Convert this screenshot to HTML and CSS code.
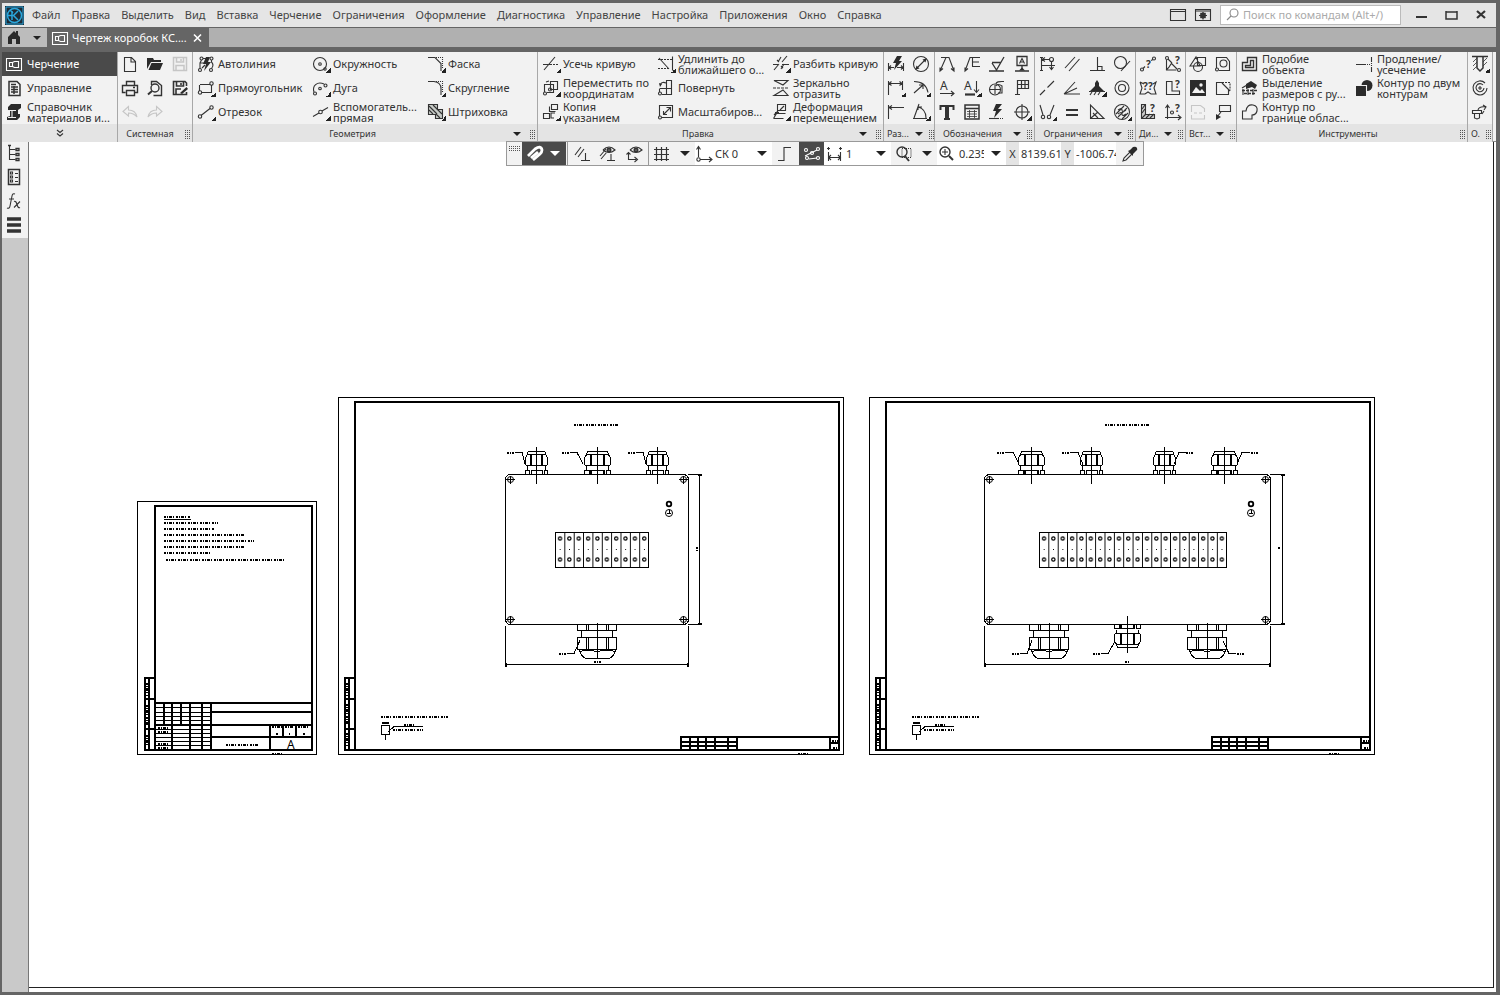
FILE: index.html
```
<!DOCTYPE html>
<html lang="ru">
<head>
  <meta charset="UTF-8">
  <meta name="viewport" content="width=device-width, initial-scale=1.0">
  <title>Чертеж коробок КС</title>
  <link rel="stylesheet" href="styles.css">
</head>
<body>

<header class="menubar">
  <svg class="logo" viewBox="0 0 19 19"><rect width="19" height="19" fill="#1d2b36"/><path d="M1 1h17v17H1z" stroke="#2aa7dd"/><circle cx="9.5" cy="9.5" r="7" stroke="#2aa7dd" stroke-width="1.5"/><path d="M7 5v9M3 9.5h4M13 5L8.500 9.5l4.500 4.500M8 7L5 4" stroke="#2aa7dd" stroke-width="1.5"/></svg>
  <nav class="menu">
    <a href="#">Файл</a>
    <a href="#">Правка</a>
    <a href="#">Выделить</a>
    <a href="#">Вид</a>
    <a href="#">Вставка</a>
    <a href="#">Черчение</a>
    <a href="#">Ограничения</a>
    <a href="#">Оформление</a>
    <a href="#">Диагностика</a>
    <a href="#">Управление</a>
    <a href="#">Настройка</a>
    <a href="#">Приложения</a>
    <a href="#">Окно</a>
    <a href="#">Справка</a>
  </nav>
  <div class="window-tools">
    <button aria-label="Окно"><svg class="ico" viewBox="0 0 20 20"><path d="M2.5 4.5h15v11h-15zM3 6.500h14"/></svg></button>
    <button aria-label="Вид окна"><svg class="ico" viewBox="0 0 20 20"><path d="M2.5 4.5h15v11h-15zM3 6h14"/><path d="M10 7v7.500M6 10.500h8M7.500 8l5 5M12.500 8l-5 5" stroke-width="1.2"/><circle cx="10" cy="10.5" r="2.200" stroke-width="1.5"/></svg></button>
  </div>
  <label class="search">
    <svg class="ico" viewBox="0 0 20 20"><circle cx="11" cy="8" r="4"/><path d="M8 11l-4 4"/></svg>
    <input type="text" placeholder="Поиск по командам (Alt+/)" aria-label="Поиск по командам">
  </label>
  <div class="window-buttons">
    <button aria-label="Свернуть"><svg class="ico" viewBox="0 0 20 20"><path d="M5 12h11" stroke-width="2"/></svg></button>
    <button aria-label="Развернуть"><svg class="ico" viewBox="0 0 20 20"><path d="M5 7h11M5 6v8h11V6" stroke-width="1.5"/></svg></button>
    <button aria-label="Закрыть"><svg class="ico" viewBox="0 0 20 20"><path d="M6 6l8 7M14 6l-8 7" stroke-width="2.2"/></svg></button>
  </div>
</header>

<div class="tabs">
  <button class="home" aria-label="Главная">
    <svg class="ico" viewBox="0 0 20 20"><path class="f" d="M4 9l6-6 2 2V3h2v4l2 2v7h-4v-5H8v5H4z"/></svg>
    <span class="arrow small"></span>
  </button>
  <div class="tab">
    <svg class="ico" viewBox="0 0 20 20"><path d="M2.5 4.5h15v12h-15zM5.5 8.500h3v4h-3zM8.500 8.500l2-1h4v6h-4l-2-1"/></svg>
    <span>Чертеж коробок КС....</span>
    <button aria-label="Закрыть вкладку"><svg class="ico" viewBox="0 0 20 20"><path d="M5 6.500l7 7M12 6.500l-7 7" stroke-width="1.6"/></svg></button>
  </div>
</div>

<div class="ribbon">
  <section class="group modes">
    <div class="cells">
      <button class="cmd active"><svg class="ico" viewBox="0 0 20 20"><path d="M2.5 4.5h15v12h-15zM5.5 8.500h3v4h-3zM8.500 8.500l2-1h4v6h-4l-2-1"/></svg><span>Черчение</span></button>
      <button class="cmd"><svg class="ico" viewBox="0 0 20 20"><path d="M5 3.500h8l3 3v11H5z" stroke-width="1.5"/><path d="M7 6.500h5M7 9h7M7 11.500h7M7 14h7M10 8v8" stroke-width="1.5"/></svg><span>Управление</span></button>
      <button class="cmd"><svg class="ico" viewBox="0 0 20 20"><path class="f" d="M7 2h10v4l-3 2v4h2v3l-3 3H3v-3l3-1V9H4V5z"/><path d="M4 8.500h8M8 9v6M4 15.500h8" stroke="#eee"/></svg><span>Справочник<br>материалов и...</span></button>
    </div>
    <footer><svg class="ico" viewBox="0 0 20 20"><path d="M7 6l3 2.500L13 6M7 9.500l3 2.500 3-2.500"/></svg></footer>
  </section>

  <section class="group icons">
    <div class="cells">
      <button aria-label="Создать"><svg class="ico" viewBox="0 0 20 20"><path d="M4.500 3.500h7l4 4v10h-11zM11 3.500v4.500h4.500"/></svg></button>
      <button aria-label="Печать"><svg class="ico" viewBox="0 0 20 20"><path d="M6.500 7V3.500h8V7M5.500 14.500h-3v-7h15v7h-3M6.500 12.500h8v5h-8zM13 9.500h2" stroke-width="1.4"/></svg></button>
      <button class="off" aria-label="Отменить"><svg class="ico" viewBox="0 0 20 20"><path d="M8.500 4.500L3 9.500l5.500 4.500v-3c4 0 6 1 8.500 4-1-5-4-7-8.500-7z"/></svg></button>
      <button aria-label="Открыть"><svg class="ico" viewBox="0 0 20 20"><path class="f" d="M2 15V4h6l1 2h7v2H6zM6.500 9H18l-3 7H3.500z"/></svg></button>
      <button aria-label="Просмотр"><svg class="ico" viewBox="0 0 20 20"><path d="M6.500 7V3.500h5l5 4v10h-8" stroke-width="1.4"/><circle cx="10" cy="10" r="4" stroke-width="1.4"/><path d="M7 13l-4 3.500" stroke-width="2"/></svg></button>
      <button class="off" aria-label="Повторить"><svg class="ico" viewBox="0 0 20 20"><path d="M11.500 4.500L17 9.500l-5.500 4.500v-3c-4 0-6 1-8.500 4 1-5 4-7 8.500-7z"/></svg></button>
      <button class="off" aria-label="Сохранить"><svg class="ico" viewBox="0 0 20 20"><path d="M3.500 3.500h13v13h-13zM6.500 4v4h7V4M6 16.500v-5h8v5M11 5v2" stroke-width="1.5"/></svg></button>
      <button aria-label="Сохранить как"><svg class="ico" viewBox="0 0 20 20"><path d="M16.500 8V5l-1.500-1.500H3.500v13h13V14M6.500 4v4h7V4M6 16v-5h5M11 5v2" stroke-width="1.6"/><path d="M10 15l6.500-6 1.500 2-6 5z" class="f"/></svg></button>
    </div>
    <footer><span>Системная</span><i class="grip"></i></footer>
  </section>

  <section class="group">
    <div class="cells">
      <button class="cmd"><svg class="ico" viewBox="0 0 20 20"><circle cx="4" cy="16" r="1.5"/><circle cx="5.5" cy="4.5" r="1.5"/><circle cx="15.5" cy="4.5" r="1.5"/><circle cx="15" cy="16" r="1.5"/><path d="M4 14.500V9l1.500-3M15.500 6v2c2 2 2 4 0 6.500M6 14l3-3M4 9h4M7 4.500h3"/><path class="f" d="M10 3h4l-2 5h3l-7 9 2-7H7z"/></svg><span>Автолиния</span></button>
      <button class="cmd more"><svg class="ico" viewBox="0 0 20 20"><path d="M4 6.500h10M3.500 7v6M6 14.500h9.500V7"/><circle cx="4" cy="14.500" r="1.700"/><circle cx="15.500" cy="5.500" r="1.700"/></svg><span>Прямоугольник</span></button>
      <button class="cmd more"><svg class="ico" viewBox="0 0 20 20"><path d="M5 13.500l9-7"/><circle cx="4" cy="14.500" r="1.700"/><circle cx="15.500" cy="5.500" r="1.700"/></svg><span>Отрезок</span></button>
      <button class="cmd more"><svg class="ico" viewBox="0 0 20 20"><circle cx="9" cy="10" r="6.500"/><circle cx="9" cy="10" r="1.300"/><circle cx="14" cy="15" r="1.200"/></svg><span>Окружность</span></button>
      <button class="cmd more"><svg class="ico" viewBox="0 0 20 20"><path d="M3 14C1 8 6 3 13 6"/><circle cx="9" cy="10.500" r="1.300"/><circle cx="14.500" cy="7.500" r="1.500"/><circle cx="4" cy="15.500" r="1.500"/></svg><span>Дуга</span></button>
      <button class="cmd more"><svg class="ico" viewBox="0 0 20 20"><path d="M2 14.500l6-3.500M11 9l6-3.500"/><circle cx="9.500" cy="10" r="1.800"/></svg><span>Вспомогатель...<br>прямая</span></button>
      <button class="cmd more"><svg class="ico" viewBox="0 0 20 20"><path d="M2 3.500h7l6 6V17"/><path d="M10 3.500h6.500V15" stroke-dasharray="1 1"/></svg><span>Фаска</span></button>
      <button class="cmd more"><svg class="ico" viewBox="0 0 20 20"><path d="M2 3.500h6q7 1 7 7V17"/><path d="M10 3.500h6.500V15" stroke-dasharray="1 1"/></svg><span>Скругление</span></button>
      <button class="cmd more"><svg class="ico" viewBox="0 0 20 20"><path d="M2.500 2.500h9v5h5v9h-7v-4h-7z" fill="#c8ccc8"/><path d="M3 4l8 8M3 8l4 4M7 3l9 9M10 12l4 4"/></svg><span>Штриховка</span></button>
    </div>
    <footer><span>Геометрия</span><i class="arrow small"></i><i class="grip"></i></footer>
  </section>

  <section class="group">
    <div class="cells">
      <button class="cmd more"><svg class="ico" viewBox="0 0 20 20"><path d="M2 10.500h7M3 16L14 3"/><path d="M9 10.500h9" stroke-dasharray="2 1"/></svg><span>Усечь кривую</span></button>
      <button class="cmd more"><svg class="ico" viewBox="0 0 20 20"><path d="M9.500 3.500h7v8h-7zM3.500 14V6.500h9v8H6M5 4l3-1"/><circle cx="4" cy="15.500" r="1.500"/><circle cx="9" cy="11.500" r="1.500"/></svg><span>Переместить по<br>координатам</span></button>
      <button class="cmd more"><svg class="ico" viewBox="0 0 20 20"><path d="M10.500 2.500h6v5h-6zM8.500 4.500v5h6M2.500 11.500h6v5h-6zM14 11h-4v5h3"/></svg><span>Копия<br>указанием</span></button>
      <button class="cmd more"><svg class="ico" viewBox="0 0 20 20"><path d="M16.500 2.500v14M3 4l10 11"/><path d="M2 5.500h14M2 14.500h12" stroke-dasharray="2 1"/></svg><span>Удлинить до<br>ближайшего о...</span></button>
      <button class="cmd"><svg class="ico" viewBox="0 0 20 20"><path d="M10.500 2.500h5v14h-5zM3.500 10.500h12M6 16.500h9M3.500 14v-3M4 7q2-4 6-2"/><circle cx="4" cy="15.500" r="1.500"/><path class="f" d="M3 5l3 1-2 3z"/></svg><span>Повернуть</span></button>
      <button class="cmd"><svg class="ico" viewBox="0 0 20 20"><path d="M3.500 14V3.500h13v12H6M8 12l6-6M10.500 5.500h4v4M7.500 9v3.500H11"/><circle cx="4" cy="15.500" r="1.500"/></svg><span>Масштабиров...</span></button>
      <button class="cmd more"><svg class="ico" viewBox="0 0 20 20"><path d="M3 16l5-6M11 8l5-6M2 10.500h5M11 10.500h7M6 6l2 2M10 12l2 2M10 3l-3 5M13 10l-3 5"/></svg><span>Разбить кривую</span></button>
      <button class="cmd"><svg class="ico" viewBox="0 0 20 20"><path d="M3 2.500h14L12 7zM3 17.500h14L12 12z"/><path d="M2 10h16" stroke-dasharray="3 1"/></svg><span>Зеркально<br>отразить</span></button>
      <button class="cmd more"><svg class="ico" viewBox="0 0 20 20"><path d="M6.500 2.500h8v6h-8zM2.500 16.500l3-5h9M2.500 16.500h10M3 13l4-4M9 8l4-4M4 10.500h4"/></svg><span>Деформация<br>перемещением</span></button>
    </div>
    <footer><span>Правка</span><i class="arrow small"></i><i class="grip"></i></footer>
  </section>

  <section class="group icons">
    <div class="cells">
      <button aria-label="Авторазмер"><svg class="ico" viewBox="0 0 20 20"><path d="M2.500 9v8M17.500 9v8M3 13.500h5M11 13.500h6M5 11.500l-2 2 2 2M15 11.500l2 2-2 2"/><path class="f" d="M11 2h5l-3 5h3l-8 9 2-7H7z"/></svg></button>
      <button class="more" aria-label="Линейный размер"><svg class="ico" viewBox="0 0 20 20"><path d="M2.500 17V3M16.500 12V3M3 5.500h13M5.500 3.500L3 5.500l2.500 2M13.500 3.500l2.500 2-2.500 2"/></svg></button>
      <button aria-label="Размер высоты"><svg class="ico" viewBox="0 0 20 20"><path d="M2.500 17V3M3 5.500h15M6 3.500l-3 2 3 2"/></svg></button>
      <button aria-label="Диаметр"><svg class="ico" viewBox="0 0 20 20"><circle cx="10" cy="10" r="7.500"/><path d="M5 15L15 5"/><path class="f" d="M4.500 15.500l1-4 3 3zM15.500 4.500l-1 4-3-3z"/></svg></button>
      <button class="more" aria-label="Радиус"><svg class="ico" viewBox="0 0 20 20"><path d="M3 3.500q12 0 14 11M3 15l9-8M8 7h4v4"/></svg></button>
      <button class="more" aria-label="Угловой размер"><svg class="ico" viewBox="0 0 20 20"><path d="M2 16.500h14M3 16L8 2M7 5q8 2 8 11M7 8l0-3h4"/></svg></button>
    </div>
    <footer><span>Раз...</span><i class="arrow small"></i><i class="grip"></i></footer>
  </section>

  <section class="group icons">
    <div class="cells">
      <button aria-label="Осевая"><svg class="ico" viewBox="0 0 20 20"><path d="M3 17L9 3.500h3L17 17M4 3.500h8M3 13.500V17l3-2.500M17 13.500V17l-3-2.500"/></svg></button>
      <button aria-label="Стрелка вида"><svg class="ico letter" viewBox="0 0 20 20"><path d="M3 15.500h14M14 13l3 2.500-3 2.500"/><text x="3" y="12">А</text></svg></button>
      <button aria-label="Текст"><svg class="ico" viewBox="0 0 20 20"><path d="M3 4h14M3.500 3v5M16.500 3v5M7 17h6" stroke-width="2"/><path d="M10 4v13" stroke-width="4"/></svg></button>
      <button aria-label="Линия-выноска"><svg class="ico" viewBox="0 0 20 20"><path d="M3 17L8 3.500h10M10 8h7M10 12.500h8M10.500 4v8.500M3 13.500V17l3-2.500"/></svg></button>
      <button class="more" aria-label="Линия разреза"><svg class="ico letter" viewBox="0 0 20 20"><path d="M14.500 3v11M12 11.500l2.500 3 2.500-3"/><path d="M3 16.500h10" stroke-width="2.2"/><text x="2" y="12">А</text></svg></button>
      <button aria-label="Таблица"><svg class="ico" viewBox="0 0 20 20"><path d="M3 3h14v14H3zM3 6.500h14" stroke-width="1.500"/><path d="M5 9.500h10M5 12h10M5 14.500h10M7.500 8v8M12.500 8v8" stroke-width="0.800"/></svg></button>
      <button aria-label="Шероховатость"><svg class="ico" viewBox="0 0 20 20"><path d="M2 17h15M5 8.500h9M5 9l4.500 7L17 3" stroke-width="1.300"/></svg></button>
      <button aria-label="Позиция"><svg class="ico" viewBox="0 0 20 20"><circle cx="8" cy="11.500" r="5.500"/><path d="M3 11.500h10M8 7v9M9 6q0-3 8-2.500M9 8q2-3 6 0v7h-4"/></svg></button>
      <button aria-label="Молния"><svg class="ico" viewBox="0 0 20 20"><path d="M2 16.500h10"/><path d="M13 16.500h4" stroke-dasharray="1 1"/><path class="f" d="M9 2h6l-4 5h4l-8 9 2-7H6z"/></svg></button>
      <button aria-label="База"><svg class="ico" viewBox="0 0 20 20"><path d="M5 2.500h10v9H5zM10 12v4M3 17h14" stroke-width="1.300"/><path d="M7.500 9.500l2.500-5 2.500 5M8.500 8h3"/><path class="f" d="M7 16.500l3-3 3 3z"/></svg></button>
      <button aria-label="Допуск формы"><svg class="ico" viewBox="0 0 20 20"><path d="M5.500 2.500h11v8h-11zM9.500 2.500v8M13 2.500v8M5.500 10v7M3 16.500h5M6 6.500h10" stroke-width="1.200"/></svg></button>
      <button class="more" aria-label="Центр"><svg class="ico" viewBox="0 0 20 20"><circle cx="10" cy="10" r="6"/><path d="M10 2v16M2 10h16"/></svg></button>
    </div>
    <footer><span>Обозначения</span><i class="arrow small"></i><i class="grip"></i></footer>
  </section>

  <section class="group icons">
    <div class="cells">
      <button aria-label="Авторасстановка"><svg class="ico" viewBox="0 0 20 20"><path d="M4.500 3v14M3 16.500h3M5 5.500h8M3 3.500h3M14.500 7v8M12.500 13l2 2.500 2-2.500M8 3.500L5 5.500l3 2M5 11.500h13"/><circle cx="14.500" cy="5.500" r="2"/></svg></button>
      <button aria-label="Коллинеарность"><svg class="ico" viewBox="0 0 20 20"><path d="M3 17l5-5M10.500 9.500L17 3"/></svg></button>
      <button class="more" aria-label="Симметрия"><svg class="ico" viewBox="0 0 20 20"><path d="M3 3l3 10M17 3l-4 10"/><circle cx="6" cy="15" r="1.700"/><circle cx="12" cy="15" r="1.700"/></svg></button>
      <button aria-label="Параллельность"><svg class="ico" viewBox="0 0 20 20"><path d="M3 14L13 3M7 17L17.500 5"/></svg></button>
      <button aria-label="Биссектриса"><svg class="ico" viewBox="0 0 20 20"><path d="M2 16h16M2 16L13 4M2 16l13-6"/></svg></button>
      <button aria-label="Равенство"><svg class="ico" viewBox="0 0 20 20"><path d="M4 8h12M4 13h12" stroke-width="2.200"/></svg></button>
      <button aria-label="Перпендикулярность"><svg class="ico" viewBox="0 0 20 20"><path d="M3 16.500h15M10.500 3v13M11 12.500h4v4"/></svg></button>
      <button class="more" aria-label="Фиксация"><svg class="ico" viewBox="0 0 20 20"><path class="f" d="M10 2l2 3v3l5 5H3l5-5V5z"/><path d="M2 13.500h16M5 14l-2 3M9 14l-2 3M13 14l-2 3"/></svg></button>
      <button aria-label="Угол"><svg class="ico" viewBox="0 0 20 20"><path d="M3.500 3v13.500H17zM4 16l7-6M6 11l5 5"/></svg></button>
      <button aria-label="Касание"><svg class="ico" viewBox="0 0 20 20"><circle cx="8.500" cy="8.500" r="6"/><path d="M9 17L18 7"/></svg></button>
      <button aria-label="Концентричность"><svg class="ico" viewBox="0 0 20 20"><circle cx="10" cy="10" r="7"/><circle cx="10" cy="10" r="3.500"/></svg></button>
      <button class="more" aria-label="Показать"><svg class="ico" viewBox="0 0 20 20"><circle cx="10" cy="10" r="7.500"/><path d="M4 12l8-8M6 15l9-9M6 8q4-3 4 0t4 0M6 12q4-3 4 0t4 0M10 17l6-6"/></svg></button>
    </div>
    <footer><span>Ограничения</span><i class="arrow small"></i><i class="grip"></i></footer>
  </section>

  <section class="group icons">
    <div class="cells">
      <button aria-label="Расстояние"><svg class="ico" viewBox="0 0 20 20"><circle cx="4" cy="15.500" r="1.500"/><circle cx="16" cy="4.500" r="1.500"/><path d="M5 14.500l2-2M15 5.500l-2 1"/><text x="8" y="14">?</text></svg></button>
      <button aria-label="Длина"><svg class="ico" viewBox="0 0 20 20"><path d="M2 4l4 2M2 4l2 6-2 6h5l3-2 3 2h5l-2-6 2-6-3 2"/><text x="5" y="12">?</text><text x="10" y="12">?</text></svg></button>
      <button aria-label="МЦХ"><svg class="ico" viewBox="0 0 20 20"><path d="M3.500 2.500h4v10h9v4h-13z" fill="#ccc"/><path d="M4 7l3-4M4 11l3-4M4 16l4-4M8 16l4-4M12 16l4-4"/><text x="12" y="10">?</text></svg></button>
      <button aria-label="Угол"><svg class="ico" viewBox="0 0 20 20"><circle cx="4" cy="4" r="1.500"/><circle cx="16" cy="16" r="1.500"/><path d="M3.500 6v10h10M3 16q3-2 5-6M5 5l4 4M8 9l6 6"/><text x="12" y="10">?</text></svg></button>
      <button aria-label="Площадь"><svg class="ico" viewBox="0 0 20 20"><path d="M9 3.500H3.500v13h13V13H9z"/><text x="12" y="10">?</text></svg></button>
      <button aria-label="Координаты"><svg class="ico" viewBox="0 0 20 20"><path d="M4.500 17V4M2.500 6l2-3 2 3M2 15.500h15M15 13l3 2.500-3 2.500"/><circle cx="9" cy="10.500" r="1.500"/><text x="12" y="10">?</text></svg></button>
    </div>
    <footer><span>Ди...</span><i class="arrow small"></i><i class="grip"></i></footer>
  </section>

  <section class="group icons">
    <div class="cells">
      <button aria-label="Фрагмент"><svg class="ico" viewBox="0 0 20 20"><circle cx="10" cy="13" r="4.500"/><path d="M9.500 3.500h8v8h-8zM2 12l6-9 4 9z"/></svg></button>
      <button aria-label="Рисунок"><svg class="ico" viewBox="0 0 20 20"><path class="f" d="M2 2h16v16H2z"/><path class="light" d="M4 15l4-6 4 4 2-2 3 4z"/><circle class="light" cx="13" cy="7" r="1.700"/></svg></button>
      <button class="off" aria-label="Обновить"><svg class="ico" viewBox="0 0 20 20"><path d="M3.500 10V3.500h9l4 3V10M3.500 13v4h13v-4M6 11h3M11 11h3"/></svg></button>
      <button aria-label="Вид"><svg class="ico" viewBox="0 0 20 20"><path d="M3.500 14V3.500h10l3 4v9H6"/><circle cx="10.500" cy="9.500" r="3.500"/><circle cx="4" cy="15.500" r="1.500"/></svg></button>
      <button aria-label="Слой"><svg class="ico" viewBox="0 0 20 20"><path d="M9 4.500H3.500v12h12V12M9 5l8 8"/><path d="M9 4.500h8v8" stroke-dasharray="2 1"/></svg></button>
      <button aria-label="Выноска"><svg class="ico" viewBox="0 0 20 20"><path d="M6.500 3.500h11v6h-11zM8 10l-4 5"/><path class="f" d="M3 12l5 3-5 3z"/></svg></button>
    </div>
    <footer><span>Вст...</span><i class="arrow small"></i><i class="grip"></i></footer>
  </section>

  <section class="group">
    <div class="cells">
      <button class="cmd"><svg class="ico" viewBox="0 0 20 20"><path d="M2.500 8.500h5v-5h9v13h-14zM5.500 11.500h5v-5h3v7h-8z" stroke-width="1.400"/></svg><span>Подобие<br>объекта</span></button>
      <button class="cmd"><svg class="ico" viewBox="0 0 20 20"><path class="f" d="M6 6l5-3 6 4-2 4-3-2-6 2z"/><path d="M2 12.500h15M4 15.500h12" stroke-dasharray="3 1" stroke-width="1.300"/><path d="M3 11v6M8 11v6M13 11v6M2 10l5-3"/></svg><span>Выделение<br>размеров с ру...</span></button>
      <button class="cmd"><svg class="ico" viewBox="0 0 20 20"><path d="M2.500 17V9H6q1-7 7-6 5 1 4 6-1 4-5 4v4z"/></svg><span>Контур по<br>границе облас...</span></button>
      <button class="cmd"><svg class="ico" viewBox="0 0 20 20"><path d="M1 10.500h9M16.500 3v4M16.500 14v4"/><path d="M10 10.500h6M16.500 7v7" stroke-dasharray="1 1"/></svg><span>Продление/<br>усечение</span></button>
      <button class="cmd"><svg class="ico" viewBox="0 0 20 20"><circle class="f" cx="12" cy="7.500" r="5.500"/><path class="f" d="M1 8h10v10H1z"/><path d="M5 7.500h6.500V13" stroke="#eee"/></svg><span>Контур по двум<br>контурам</span></button>
    </div>
    <footer><span>Инструменты</span><i class="grip"></i></footer>
  </section>

  <section class="group icons">
    <div class="cells">
      <button class="more" aria-label="Отверстие"><svg class="ico" viewBox="0 0 20 20"><path d="M2 2.500h16M7 3v11l3 3 3-3V3" stroke-width="1.500"/><path d="M3 8l4-4M3 12l4-4M3 16l4-4M13 8l4-4M13 12l4-4" stroke-width="0.800"/></svg></button>
      <button aria-label="Резьба"><svg class="ico" viewBox="0 0 20 20"><path d="M15 5a7 7 0 1 0 2 5M13 7a4 4 0 1 0 1 3M8 10h4M10 8v4"/></svg></button>
      <button aria-label="Крепеж"><svg class="ico" viewBox="0 0 20 20"><path d="M2.500 8.500h9v3h-9zM4.500 12v4l2.500 1 2.500-1v-4M8 8q1-4 8-3M13 3l3 2-2 3M14 9l-2 3"/></svg></button>
    </div>
    <footer><span>О.</span><i class="grip"></i></footer>
  </section>
</div>

<main class="workspace">
  <aside class="rail">
    <button aria-label="Дерево"><svg class="ico" viewBox="0 0 20 20"><path d="M5.500 2.500v14h6M5.500 6.500h6M5.500 11.500h6"/><path d="M4 2.500h3M12 5.500h3v2h-3zM12 10.500h3v2h-3zM12 15.500h3v2h-3z" stroke-width="1.300"/></svg></button>
    <button aria-label="Параметры"><svg class="ico" viewBox="0 0 20 20"><path d="M4.500 2.500h11v15h-11z" stroke-width="1.500"/><path d="M6.500 5h2v2h-2zM6.500 9h2v2h-2zM6.500 13h2v2h-2zM11 6.500h3M11 10.500h3M11 14.500h3"/></svg></button>
    <button aria-label="Переменные"><svg class="ico" viewBox="0 0 20 20"><path d="M11 3q-2.500-1-3 2L6 15q-.5 3-3 2M5 8h5M10 10.500q2-1 3 3t3 3M16 10.500l-6 6"/></svg></button>
    <button aria-label="Слои"><svg class="ico" viewBox="0 0 20 20"><path d="M3 4h14M3 10h14M3 16h14" stroke-width="3.500"/></svg></button>
  </aside>

  <div class="canvas">
    <svg class="drawing">
      <defs>
        <g id="gland">
          <path d="M-10-20l2-3h16l2 3M-11-17l2-3h18l2 3v7l-1 1h-20l-1-1zM-6-20v11M-5-20v11M6-20v11M5-20v11M-9-9v4M9-9v4M-11 0v-4h4V0M-5.500 0v-4h11V0M7.500 0v-4H11V0M0-28V9"/>
        </g>
        <g id="gland-big">
          <path d="M-20 0v6h39V0M-11 0v6M-9 0v6M9 0v6M11 0v6M-16 6v7M15 6v7M-20 13h39v12h-39zM-11 13v12M-9 13v12M9 13v12M11 13v12M-18 26q1 5 6 8h24q5-3 6-8M-18 27q8-2 18 0 9-2 18 0M0-2v36"/>
        </g>
        <g id="screw"><circle r="3"/><path d="M-4.500 0h9M0-4v8"/></g>
        <g id="ground"><circle cy="-9" r="2.300" stroke-width="1.800"/><circle r="3.500"/><path d="M-2 .5h4M0-3v3"/></g>
        <pattern id="terminal" width="9.360" height="35" patternUnits="userSpaceOnUse">
          <path d="M.5 0v35" stroke="#000" stroke-width="1.300"/>
          <circle cx="5" cy="6.500" r="1.600" fill="none" stroke="#000" stroke-width="1.200"/>
          <circle cx="5" cy="27.500" r="1.600" fill="none" stroke="#000" stroke-width="1.200"/>
          <path d="M4.500 17.500h1" stroke="#000"/>
        </pattern>
        <g id="sheet">
          <rect x="3.500" y="7.500" width="505" height="357"/>
          <path class="thick" d="M20 12h484v348H20zM9.500 360V288H20M9 360h11M14 288v72M9 309h11M9 339h11"/>
          <path class="note" d="M239 34.500h44M46 326.500h67M69 334.500h10M58 339.500h30M463 363.500h12M12 293v13M12 314v20M12 343v13"/>
          <path d="M46.500 335.500h8v9h-8zM47 332.500h7M47 333.500h7M50.500 345v5M53 342l6-5.500h29"/>
          <path class="thick" d="M346 360v-13h158M346 352h56M346 356h56M355 347v13M363 347v13M371 347v13M380 347v13M393 347v13M402 347v13M495 347v13M495 353h9"/>
          <path class="note" d="M497 350.500h6M498 357.500h4"/>
        </g>
      </defs>

      <!-- text sheet -->
      <g transform="translate(101 348)">
        <rect x="7.500" y="11.500" width="179" height="253"/>
        <path class="thick" d="M25 16h157v244H25zM14.500 260V188H25M14 260h11M19 188v72M14 209h11M14 239h11"/>
        <path class="note" d="M34 26.500h26M34 32.500h54M34 38.500h51M34 44.500h80M34 51h90M34 57h80M34 63h46M36 69.500h118M17 193v13M17 215v20M17 245v12M28 237.500h12M28 241.500h12M28 253.500h12M28 258h12M96 254.500h32M142 237h10M155 237h8M168 237h12M146 244h2M159 244h1M173 244h2M142 263.500h12"/>
        <path d="M34 29.500h27"/>
        <path class="thick" d="M25 213h157M81 213v47M81 222h101M25 235h157M81 247h101M140 235v25M153 235v12M166 235v12M34 213v22M51 213v22M42 213v47M60 213v47M72 213v47"/>
        <path d="M25 217.500h56M25 222.500h56M25 226.500h56M25 230.500h56M25 239.500h56M25 243.500h56M25 247.500h56M25 251.500h56M25 255.500h56"/>
        <text x="157" y="259">А</text>
      </g>

      <!-- box with ten terminals -->
      <g transform="translate(306 248)">
        <use href="#sheet"/>
        <rect x="170.500" y="84.500" width="183" height="150" rx="5"/>
        <use href="#screw" x="175.500" y="89.500"/>
        <use href="#screw" x="348.500" y="89.500"/>
        <use href="#screw" x="175.500" y="229.500"/>
        <use href="#screw" x="348.500" y="229.500"/>
        <use href="#ground" x="334" y="123"/>
        <g transform="translate(220 142)"><rect class="strip" width="93.600" height="35"/></g>
        <use href="#gland" x="201.500" y="84.500"/>
        <use href="#gland" transform="translate(262.500 84.500) scale(1.180 1)"/>
        <use href="#gland" x="322.500" y="84.500"/>
        <use href="#gland-big" x="262.500" y="234.500"/>
        <path d="M180 62.500h7l3 11M235 62.500h7l6 11M301 62.500h7l3 11M232 263.500h7l6-13"/>
        <path d="M353 84.500h13M353 234.500h13M364.500 84v151M170.500 236v40M353.500 236v40M170 274.500h184"/>
        <path class="ends" d="M170 274.500h2M352 274.500h2M364.500 84v2M364.500 233v2"/>
        <path class="note" d="M172 62.500h7M227 62.500h7M293 62.500h7M224 263.500h7M259 271.500h7M362 157v4"/>
      </g>

      <!-- box with twenty terminals -->
      <g transform="translate(837 248)">
        <use href="#sheet"/>
        <rect x="118.500" y="84.500" width="286" height="150" rx="5"/>
        <use href="#screw" x="123.500" y="89.500"/>
        <use href="#screw" x="399.500" y="89.500"/>
        <use href="#screw" x="123.500" y="229.500"/>
        <use href="#screw" x="399.500" y="229.500"/>
        <use href="#ground" x="385" y="123"/>
        <g transform="translate(173 142)"><rect class="strip" width="187.200" height="35"/></g>
        <use href="#gland" transform="translate(165.500 84.500) scale(1.180 1)"/>
        <use href="#gland" x="225.500" y="84.500"/>
        <use href="#gland" x="298.500" y="84.500"/>
        <use href="#gland" transform="translate(358.500 84.500) scale(1.180 1)"/>
        <use href="#gland-big" x="183.500" y="234.500"/>
        <use href="#gland" transform="translate(261.500 234.500) scale(1.180 -1)"/>
        <use href="#gland-big" x="341.500" y="234.500"/>
        <path d="M139 62.500h8l6 11M204 62.500h8l5 12M308 74l5-11.500h8M371 74l5-11.500h8M154 263.500h7l5-13M235 263.500h7l7-12M357 251l6 12.500h7"/>
        <path d="M404 84.500h14M404 234.500h14M416.500 84v151M118.500 236v40M404.500 236v40M118 274.500h287"/>
        <path class="ends" d="M118 274.500h2M403 274.500h2M416.500 84v2M416.500 233v2"/>
        <path class="note" d="M131 62.500h7M196 62.500h7M320 62.500h7M385 62.500h7M146 263.500h7M227 263.500h7M371 263.500h7M259 272h5M413 157v3"/>
      </g>
    </svg>

    <div class="quickbar">
      <i class="grip wide"></i>
      <button class="dark" aria-label="Привязки"><svg class="ico" viewBox="0 0 20 20"><path d="M3 12l7-7q6-4 7 1 0 2-2 4l-7 6M6 14l7-6" stroke-width="2.800"/></svg><i class="arrow"></i></button>
      <div class="set">
        <button aria-label="Параметризация"><svg class="ico" viewBox="0 0 20 20"><path d="M3 11L9 3M6 13l6-8M9 16.500h9M13.500 9v7"/></svg></button>
        <button aria-label="Показ ограничений"><svg class="ico" viewBox="0 0 20 20"><path d="M5 6q6-6 12 0-6 5-12 0M2 12l6-7M3 15l6-7M9 16.500h8M13 10v6"/><circle cx="11" cy="6" r="1.500" stroke-width="2"/></svg></button>
        <button aria-label="Показ степеней свободы"><svg class="ico" viewBox="0 0 20 20"><path d="M6 6q6-6 12 0-6 5-12 0M4.500 9v6.500h8M2.500 10.500l2-2 2 2M10.500 13l3 2.500-3 2.500"/><circle cx="12" cy="6" r="1.500" stroke-width="2"/></svg></button>
      </div>
      <button class="grid" aria-label="Сетка"><svg class="ico" viewBox="0 0 20 20"><path d="M4.500 3v14M9.500 3v14M14.500 3v14M2 5.500h15M2 10.500h15M2 15.500h15" stroke-width="1.200"/></svg><i class="arrow"></i></button>
      <div class="field cs">
        <svg class="ico" viewBox="0 0 20 20"><path d="M3.500 13V3M1.500 5.500l2-3 2 3M5 15.500h11M14 13l3 2.500-3 2.500"/><circle cx="3.500" cy="15.500" r="1.700"/></svg>
        <select aria-label="Система координат"><option>СК 0</option></select><i class="arrow"></i>
      </div>
      <button class="step" aria-label="Ортогональное черчение"><svg class="ico" viewBox="0 0 20 20"><path d="M2 16.500h6v-13h7"/></svg></button>
      <button class="dark round" aria-label="Округление"><svg class="ico" viewBox="0 0 20 20"><path d="M3 12l12-6M7 15l8-1"/><circle cx="4" cy="6" r="1.500"/><circle cx="16" cy="5" r="1.500"/><circle cx="10" cy="9" r="1.500"/><circle cx="5" cy="14" r="1.500"/><circle cx="16" cy="14" r="1.500"/></svg></button>
      <div class="field rounding">
        <svg class="ico" viewBox="0 0 20 20"><path d="M4.500 8v9M16.500 8v9M5 13.500h11M7 11l-2.500 2.500L7 16M14 11l2.500 2.500L14 16M3 4.500h3M15 4.500h3M4.500 3v3M16.500 3v3"/></svg>
        <select aria-label="Шаг округления"><option>1</option></select><i class="arrow"></i>
      </div>
      <button class="grid" aria-label="Показать"><svg class="ico" viewBox="0 0 20 20"><circle cx="8" cy="8" r="5" stroke-width="1.400"/><path d="M11 12l4 5" stroke-width="2"/><path d="M8 4.500h9v9H8z" stroke-dasharray="1 1"/></svg><i class="arrow"></i></button>
      <div class="field zoom">
        <svg class="ico" viewBox="0 0 20 20"><circle cx="8" cy="8" r="5" stroke-width="1.400"/><path d="M12 12l4 4" stroke-width="2"/><path d="M5 8h6M8 5v6"/></svg>
        <input type="text" value="0.2354" aria-label="Масштаб"><i class="arrow"></i>
      </div>
      <label class="coord"><span>X</span><input type="text" value="8139.615"></label>
      <label class="coord"><span>Y</span><input type="text" value="-1006.743"></label>
      <button class="step" aria-label="Копировать свойства"><svg class="ico" viewBox="0 0 20 20"><path d="M3 17l1-3 6-6 2 2-6 6z"/><path class="f" d="M8 7l2-1 3-3q3-1 4 1t-1 3l-3 3v2z"/></svg></button>
    </div>
  </div>
</main>

</body>
</html>
```

FILE: styles.css
```
* {
  box-sizing: border-box;
}
body {
  margin: 0;
  height: 100vh;
  display: flex;
  flex-direction: column;
  border: solid #656565;
  border-width: 3px 4px 3px 2px;
  background-color: #656565;
  color: #333;
  font-family: "Noto Sans", "Open Sans", sans-serif;
  font-size: 11px;
  line-height: 16px;
  overflow: hidden;
}
button {
  margin: 0;
  padding: 0;
  border: none;
  background: none;
  color: inherit;
  font: inherit;
  cursor: pointer;
}
.ico {
  display: block;
  flex: none;
  width: 20px;
  height: 20px;
  fill: none;
  stroke: #333;
  stroke-width: 1.1;
}
.ico .f {
  fill: #2b2b2b;
  stroke: none;
}
.ico .light {
  fill: #f2f2f2;
  stroke: none;
}
.ico text {
  fill: #333;
  stroke: none;
  font-size: 10px;
  font-weight: bold;
}
.ico.letter text {
  font-size: 12px;
  font-weight: normal;
}
.arrow {
  flex: none;
  border: solid transparent;
  border-width: 5px 5px 0;
  border-top-color: #222;
}
.arrow.small {
  border-width: 4px 4px 0;
  border-top-color: #222;
}
.grip {
  flex: none;
  width: 5px;
  height: 9px;
  background: repeating-linear-gradient(#555 0 1px, transparent 1px 2px);
  -webkit-mask: repeating-linear-gradient(90deg, #000 0 1px, transparent 1px 2px);
}

/* menu */
.menubar {
  flex: none;
  display: flex;
  align-items: center;
  height: 24px;
  background-color: #e5e5e5;
}
.logo {
  width: 19px;
  height: 19px;
  margin: 0 8px 0 3px;
  fill: none;
}
.menu {
  display: flex;
  gap: 11px;
  margin-right: auto;
}
.menu a {
  color: #444;
  text-decoration: none;
}
.window-tools {
  display: flex;
  gap: 5px;
  margin-right: 7px;
}
.search {
  display: flex;
  align-items: center;
  width: 181px;
  height: 20px;
  padding-left: 2px;
  border: 1px solid #bbb;
  background-color: #fff;
}
.search .ico {
  stroke: #888;
}
.search input {
  flex: 1;
  min-width: 0;
  padding: 0;
  border: none;
  background: none;
  font: inherit;
}
.search input::placeholder {
  color: #aaa;
}
.window-buttons {
  display: flex;
  gap: 10px;
  margin: 0 5px 0 10px;
}

/* document tabs */
.tabs {
  flex: none;
  display: flex;
  height: 25px;
  border: solid #656565;
  border-width: 1px 0 5px;
  background-color: #b0b0b0;
}
.home {
  display: flex;
  align-items: center;
  gap: 9px;
  width: 45px;
  padding-left: 2px;
  background-color: #bcbcbc;
}
.tab {
  display: flex;
  align-items: center;
  width: 162px;
  padding-left: 3px;
  background-color: #656565;
  color: #fff;
}
.tab .ico {
  stroke: #fff;
}
.tab span {
  flex: 1;
  padding: 1px 0 0 2px;
  white-space: nowrap;
}

/* ribbon */
.ribbon {
  flex: none;
  display: grid;
  grid-template-columns: 116px 75px 345px 346px 51px 100px 101px 50px 51px 231px 25px;
  height: 90px;
  background-color: #f2f2f2;
  border-bottom: 1px solid #8c8c8c;
}
.group {
  display: flex;
  flex-direction: column;
  border-right: 1px solid #a8a8a8;
}
.cells {
  display: grid;
  grid-template-rows: repeat(3, 24px);
  grid-auto-columns: 115px;
  grid-auto-flow: column;
}
.icons .cells {
  grid-auto-columns: 25px;
}
.icons button {
  display: flex;
  align-items: center;
  padding-left: 2px;
}
.cmd {
  display: flex;
  align-items: center;
  gap: 2px;
  padding-left: 3px;
  line-height: 11px;
  text-align: left;
  white-space: nowrap;
}
.cmd span {
  padding-bottom: 1px;
}
.modes .cmd {
  gap: 3px;
  padding-left: 2px;
}
.active {
  background-color: #4a4a4a;
  color: #fff;
}
.active .ico {
  stroke: #fff;
}
.more .ico {
  background: linear-gradient(135deg, transparent 50%, #222 50%) no-repeat right 0 bottom 1px / 5px 5px;
}
.off .ico {
  stroke: #c6c6c6;
}
.group footer {
  flex: 1;
  display: flex;
  align-items: center;
  gap: 9px;
  padding: 0 2px 0 8px;
  background-color: #e4e4e4;
  font-size: 9px;
  white-space: nowrap;
}
.group footer span {
  flex: 1;
  text-align: center;
}
.modes footer {
  justify-content: center;
  padding: 0;
}
.icons footer {
  gap: 6px;
  padding-left: 3px;
}

/* drawing area */
.workspace {
  flex: 1;
  display: flex;
  min-height: 0;
  background-color: #fff;
}
.rail {
  width: 27px;
  border-right: 1px solid #777;
  background-color: #c9c9c9;
}
.rail button {
  display: flex;
  align-items: center;
  width: 100%;
  height: 24px;
  padding: 0 0 2px 2px;
  background-color: #f2f2f2;
}
.canvas {
  position: relative;
  flex: 1;
  margin: 0 2px 4px 0;
  border: solid #222;
  border-width: 0 1px 1px 0;
}
.drawing {
  display: block;
  width: 100%;
  height: 100%;
  fill: none;
  stroke: #000;
  stroke-width: 1;
}
.drawing path,
.drawing rect {
  shape-rendering: crispEdges;
}
.drawing .thick {
  stroke-width: 2;
}
.drawing .note {
  stroke-width: 2;
  stroke-dasharray: 2 1 1 1 3 1 1 2;
}
.drawing .ends {
  stroke-width: 4;
}
.drawing .strip {
  fill: url(#terminal);
}
.drawing text {
  fill: #000;
  stroke: none;
  font-size: 12px;
}

/* quick access bar over the canvas */
.quickbar {
  position: absolute;
  top: -1px;
  left: 477px;
  display: flex;
  height: 25px;
  border: 1px solid #999;
  background-color: #f2f2f2;
}
.quickbar button,
.field,
.coord {
  display: flex;
  align-items: center;
}
.grip.wide {
  width: 11px;
  height: 5px;
  margin: 4px 2px 0;
}
.quickbar .dark {
  width: 44px;
  gap: 5px;
  padding-left: 3px;
  background-color: #4a4a4a;
}
.quickbar .dark.round {
  width: 25px;
}
.dark .ico {
  stroke: #fff;
}
.dark .arrow {
  border-top-color: #fff;
}
.set {
  display: flex;
  gap: 6px;
  width: 82px;
  padding-left: 4px;
  margin-left: 1px;
  border: solid #999;
  border-width: 0 1px;
}
.quickbar .grid {
  width: 46px;
  gap: 8px;
  padding-left: 3px;
}
.quickbar .step {
  width: 27px;
  padding-left: 4px;
}
.field {
  padding-right: 5px;
  background-color: #fff;
}
.cs {
  width: 77px;
}
.rounding {
  width: 67px;
}
.zoom {
  width: 69px;
}
.field select,
.field input,
.coord input {
  flex: 1;
  min-width: 0;
  padding: 0;
  border: none;
  background: none;
  color: inherit;
  font: inherit;
  appearance: none;
}
.rounding select {
  padding-left: 2px;
}
.zoom input {
  flex: 0 1 25px;
  margin: 0 7px 0 2px;
}
.coord {
  width: 55px;
}
.coord span {
  width: 13px;
  height: 23px;
  line-height: 23px;
  background-color: #e4e4e4;
  text-align: center;
}
.coord input {
  height: 23px;
  padding-left: 2px;
  background-color: #fff;
}
```
